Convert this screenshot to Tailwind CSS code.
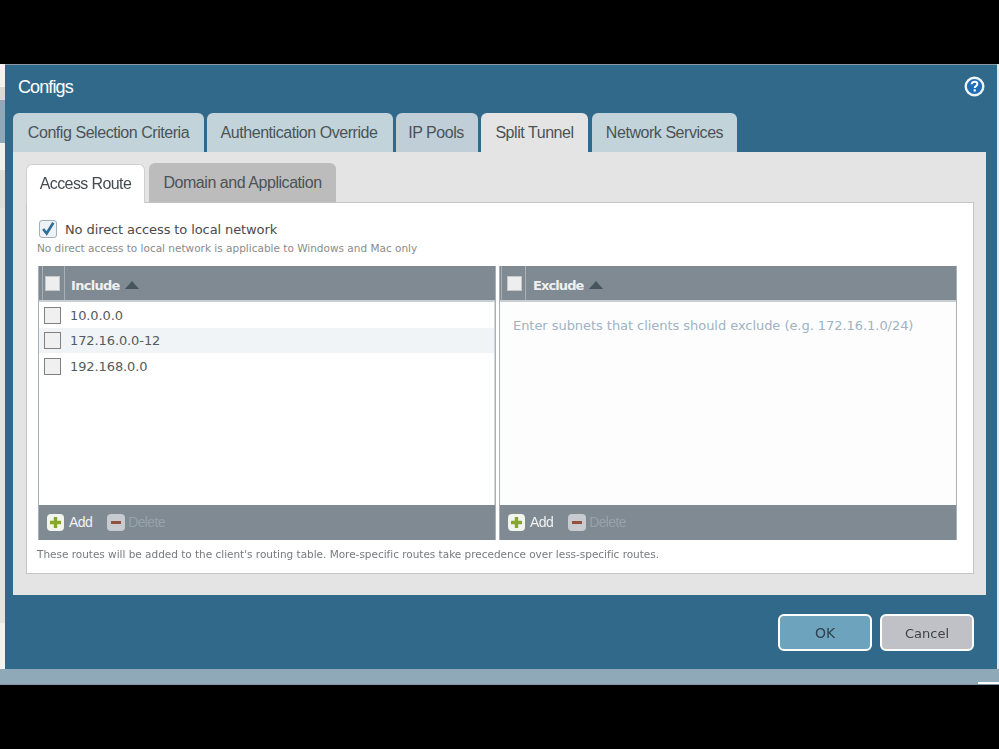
<!DOCTYPE html>
<html lang="en">
<head>
    <meta charset="UTF-8">
    <title>Configs</title>
    <script src="https://cdn.jsdelivr.net/npm/@tailwindcss/browser@4"></script>
</head>
<body class="bg-black h-[749px] w-[999px] overflow-hidden font-['Liberation_Sans',sans-serif]">
    <div class="pt-[64px] blur-[0.35px]">
        <div class="flex h-[605px]">
            <!-- page behind the dialog -->
            <div class="w-[5px] flex flex-col bg-[#eeeeee]">
                <div class="h-[23px] bg-[#f2f2f2]"></div>
                <div class="h-[13px] bg-[#d9d9d9]"></div>
                <div class="h-[43px] bg-[#8fa9b8]"></div>
                <div class="h-[27px] bg-[#f0f0f0]"></div>
                <div class="h-[38px] bg-[#dedede]"></div>
                <div class="h-[415px] bg-[#e4e4e4]"></div>
                <div class="flex-1 bg-[#f2f2f2]"></div>
            </div>

            <!-- dialog -->
            <div class="w-[992px] bg-[#30698a] border-t border-[#8a9aa3] flex flex-col">
                <div class="h-[48px] pl-[13px] pr-[12px] flex items-center justify-between">
                    <span class="text-white text-[18px] tracking-[-0.9px] pb-[4px]">Configs</span>
                    <svg width="21" height="21" viewBox="0 0 21 21" class="mb-[5px]">
                        <circle cx="10.5" cy="10.5" r="8.8" fill="#1f6db3" stroke="#eef4f8" stroke-width="2.4"/>
                        <path d="M7.6 8.3c0-1.6 1.3-2.6 3-2.6s2.8 1 2.8 2.4c0 2-2.7 2-2.7 3.9" fill="none" stroke="#fff" stroke-width="2"/>
                        <rect x="9.6" y="13.3" width="2.2" height="2.2" fill="#fff"/>
                    </svg>
                </div>

                <!-- top tabs -->
                <div class="flex pl-[8px] h-[39px] text-[16px] tracking-[-0.45px] text-[#4a5358]">
                    <div class="w-[191px] mr-[3px] rounded-t-[6px] bg-[#c3d3da] flex items-center justify-center">Config Selection Criteria</div>
                    <div class="w-[186px] mr-[3px] pr-[2px] rounded-t-[6px] bg-[#c3d3da] flex items-center justify-center">Authentication Override</div>
                    <div class="w-[82px] mr-[3px] pr-[2px] rounded-t-[6px] bg-[#c0ced8] flex items-center justify-center">IP Pools</div>
                    <div class="w-[107px] mr-[4px] rounded-t-[6px] bg-[#e4e4e4] flex items-center justify-center">Split Tunnel</div>
                    <div class="w-[145px] rounded-t-[6px] bg-[#c3d3da] flex items-center justify-center">Network Services</div>
                </div>

                <!-- tab panel -->
                <div class="ml-[8px] w-[973px] h-[443px] bg-[#e4e4e4] pl-[13px] pt-[10px]">
                    <div class="flex h-[40px] items-end text-[16px] tracking-[-0.45px]">
                        <div class="w-[119px] h-[39px] -mb-px relative rounded-t-[6px] bg-white border border-b-0 border-[#cfcfcf] text-[#444b50] tracking-[-0.6px] flex items-center justify-center">Access Route</div>
                        <div class="w-[187px] h-[39px] ml-[4px] rounded-t-[6px] bg-[#bcbcbc] text-[#4c5256] flex items-center justify-center">Domain and Application</div>
                    </div>

                    <div class="w-[948px] h-[372px] bg-white border border-[#c4c4c4] pl-[11px] font-['DejaVu_Sans',sans-serif]">
                        <div class="flex items-center pt-[16px] h-[35px]">
                            <div class="ml-px w-[18px] h-[18px] rounded-[3px] border border-[#9fb0bc] bg-[#eef2f5] flex items-center justify-center">
                                <svg width="18" height="18" viewBox="0 0 18 18"><path d="M3.5 9l4 5 7.5-12" fill="none" stroke="#2d6f98" stroke-width="3"/></svg>
                            </div>
                            <span class="ml-[8px] text-[13px] tracking-[-0.1px] text-[#4a4a4a] pt-[3px]">No direct access to local network</span>
                        </div>
                        <div class="text-[10.5px] tracking-[0px] text-[#8b8b8b] mt-[3px] leading-[14px] -ml-[1px]">No direct access to local network is applicable to Windows and Mac only</div>

                        <!-- include / exclude grids -->
                        <div class="flex gap-[3px] mt-[11px]">
                            <div class="w-[458px] h-[274px] flex flex-col border-x border-[#a9b1b6] bg-white">
                                <div class="h-[36px] bg-[#7f8a92] border-b-2 border-[#c9d0d4] flex items-center shrink-0">
                                    <div class="ml-[3px] w-[23px] h-full flex items-center border-x border-[#a8b0b6]">
                                        <div class="ml-[2px] w-[15px] h-[15px] border border-[#c5c9cc] bg-[#eeeeee]"></div>
                                    </div>
                                    <span class="ml-[6px] pt-[5px] text-[13px] font-bold tracking-[-0.7px] text-[#eef0f1]">Include</span>
                                    <svg width="14" height="8" viewBox="0 0 14 8" class="ml-[5px] mt-[4px]"><path d="M0 8L7 0l7 8z" fill="#48555e"/></svg>
                                </div>
                                <div class="flex-1 text-[13px] tracking-[-0.1px] text-[#555b60] border-r border-[#d5d8da]">
                                    <div class="h-[25px] mt-px flex items-center">
                                        <div class="w-[26px] flex justify-center"><div class="w-[17px] h-[17px] border border-[#808080] bg-[#f0f0f0]"></div></div>
                                        <span class="ml-[5px]">10.0.0.0</span>
                                    </div>
                                    <div class="h-[25px] flex items-center bg-[#f1f4f6]">
                                        <div class="w-[26px] flex justify-center"><div class="w-[17px] h-[17px] border border-[#808080] bg-[#f0f0f0]"></div></div>
                                        <span class="ml-[5px]">172.16.0.0-12</span>
                                    </div>
                                    <div class="h-[25px] mt-px flex items-center">
                                        <div class="w-[26px] flex justify-center"><div class="w-[17px] h-[17px] border border-[#808080] bg-[#f0f0f0]"></div></div>
                                        <span class="ml-[5px]">192.168.0.0</span>
                                    </div>
                                </div>
                                <div class="h-[35px] bg-[#7f8a92] flex items-center pl-[8px] shrink-0">
                                    <div class="w-[17px] h-[17px] rounded-[4px] bg-[#f2f4ee] flex items-center justify-center">
                                        <svg width="13" height="13" viewBox="0 0 13 13"><path d="M6.5 1v11M1 6.5h11" stroke="#86a82a" stroke-width="3.4"/></svg>
                                    </div>
                                    <span class="ml-[5px] text-[14px] tracking-[-0.6px] text-[#f0f2f3] font-['Liberation_Sans',sans-serif]">Add</span>
                                    <div class="ml-[15px] w-[18px] h-[17px] rounded-[4px] bg-[#c8ccd0] flex items-center justify-center">
                                        <div class="w-[10px] h-[3px] bg-[#93503a]"></div>
                                    </div>
                                    <span class="ml-[3px] text-[14px] tracking-[-0.6px] text-[#98a2a9] font-['Liberation_Sans',sans-serif]">Delete</span>
                                </div>
                            </div>

                            <div class="w-[458px] h-[274px] flex flex-col border-x border-[#a9b1b6] bg-[#fdfdfd]">
                                <div class="h-[36px] bg-[#7f8a92] border-b-2 border-[#c9d0d4] flex items-center shrink-0">
                                    <div class="ml-px w-[25px] h-full flex items-center border-x border-[#a8b0b6]">
                                        <div class="ml-[5px] w-[15px] h-[15px] border border-[#c5c9cc] bg-[#eeeeee]"></div>
                                    </div>
                                    <span class="ml-[7px] pt-[5px] text-[13px] font-bold tracking-[-0.9px] text-[#eef0f1]">Exclude</span>
                                    <svg width="14" height="8" viewBox="0 0 14 8" class="ml-[5px] mt-[4px]"><path d="M0 8L7 0l7 8z" fill="#48555e"/></svg>
                                </div>
                                <div class="flex-1 pl-[13px] pt-[16px] text-[13px] tracking-[-0.05px] leading-[16px] text-[#9fb3c2]">Enter subnets that clients should exclude (e.g. 172.16.1.0/24)</div>
                                <div class="h-[35px] bg-[#7f8a92] flex items-center pl-[8px] shrink-0">
                                    <div class="w-[17px] h-[17px] rounded-[4px] bg-[#f2f4ee] flex items-center justify-center">
                                        <svg width="13" height="13" viewBox="0 0 13 13"><path d="M6.5 1v11M1 6.5h11" stroke="#86a82a" stroke-width="3.4"/></svg>
                                    </div>
                                    <span class="ml-[5px] text-[14px] tracking-[-0.6px] text-[#f0f2f3] font-['Liberation_Sans',sans-serif]">Add</span>
                                    <div class="ml-[15px] w-[18px] h-[17px] rounded-[4px] bg-[#c8ccd0] flex items-center justify-center">
                                        <div class="w-[10px] h-[3px] bg-[#93503a]"></div>
                                    </div>
                                    <span class="ml-[3px] text-[14px] tracking-[-0.6px] text-[#98a2a9] font-['Liberation_Sans',sans-serif]">Delete</span>
                                </div>
                            </div>
                        </div>
                        <div class="text-[10.5px] tracking-[-0.02px] text-[#777b7e] mt-[7px] leading-[14px] -ml-[1px]">These routes will be added to the client's routing table. More-specific routes take precedence over less-specific routes.</div>
                    </div>
                </div>

                <!-- buttons -->
                <div class="flex justify-end gap-[8px] pr-[23px] pt-[19px] text-[13px] font-['DejaVu_Sans',sans-serif]">
                    <button class="w-[94px] h-[37px] pt-[2px] rounded-[6px] border-2 border-white bg-[#6ea3bd] text-[14px] text-[#2f4250]">OK</button>
                    <button class="w-[94px] h-[37px] pt-[2px] rounded-[6px] border-2 border-white bg-[#bfc1c6] text-[#3e4348]">Cancel</button>
                </div>
            </div>
            <div class="w-[2px] bg-[#e6e9eb]"></div>
        </div>
        <div class="h-[16px] bg-[#8fa9b8] border-b border-[#7e97a6] flex justify-end items-end">
            <div class="w-[21px] h-[2px] bg-white"></div>
        </div>
    </div>
</body>
</html>
